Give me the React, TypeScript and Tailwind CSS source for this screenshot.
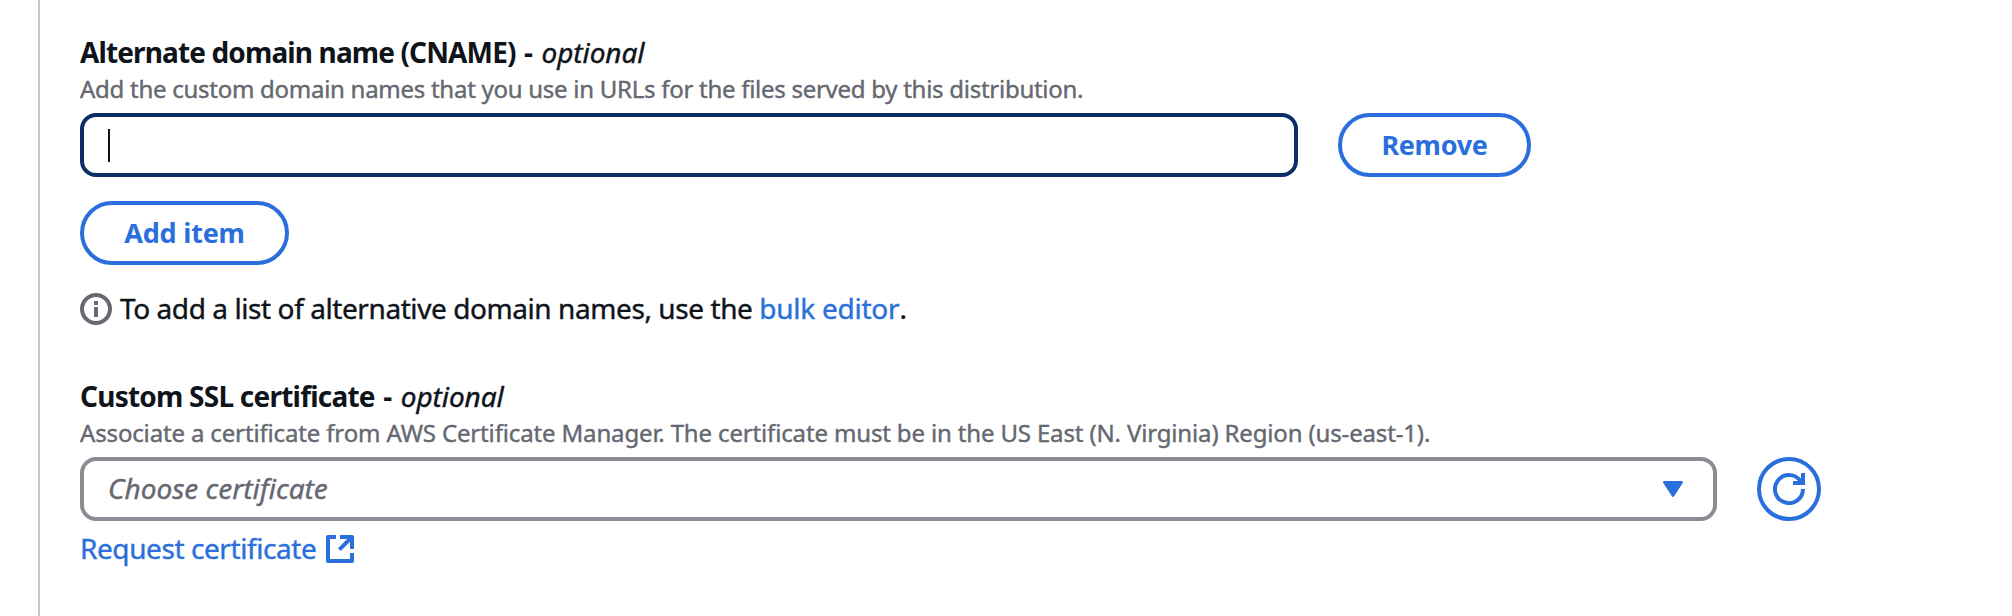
import type { ReactNode } from 'react';

function FieldLabel({ children, className }: { children: ReactNode; className: string }) {
  return (
    <div className="flex h-10 items-baseline whitespace-pre text-[28px] leading-10 text-[#0f141a]">
      <span className={`font-bold ${className}`}>{children}</span>
      <span className="w-[26px] shrink-0 text-center font-bold">-</span>
      <span className="italic tracking-[-0.1px] [-webkit-text-stroke:0.4px]">optional</span>
    </div>
  );
}

function Hint({ children, className }: { children: ReactNode; className: string }) {
  return (
    <p
      className={`mt-px h-8 whitespace-nowrap text-2xl leading-8 text-[#656871] [-webkit-text-stroke:0.4px] ${className}`}
    >
      {children}
    </p>
  );
}

function PillButton({ children, className }: { children: ReactNode; className: string }) {
  return (
    <button
      type="button"
      className={`flex h-16 items-center justify-center rounded-full border-4 border-[#2a6fdb] pb-px text-[27px] leading-10 font-bold text-[#2a6fdb] ${className}`}
    >
      {children}
    </button>
  );
}

function InfoIcon() {
  return (
    <svg viewBox="0 0 16 16" className="mt-0.5 size-8 shrink-0" fill="none" stroke="#656871" strokeWidth="2">
      <circle cx="8" cy="8" r="7" />
      <path d="M8 4v2M8 7v5" />
    </svg>
  );
}

function RefreshIcon() {
  return (
    <svg viewBox="0 0 16 16" className="size-8" fill="none" stroke="#2a6fdb" strokeWidth="2">
      <path d="M15 8A7 7 0 1 1 14.1 4.6" />
      <path d="M10 5h5V0" />
    </svg>
  );
}

function ExternalIcon() {
  return (
    <svg
      viewBox="0 0 16 16"
      className="mt-0.5 size-8"
      fill="none"
      stroke="#2a6fdb"
      strokeWidth="2"
      strokeLinejoin="round"
    >
      <path d="M14 10v4H2V2h4" />
      <path d="M8 2h6v6" />
      <path d="M7.7 8.3l6.3-6.3" />
    </svg>
  );
}

export default function App() {
  return (
    <main className="h-[616px] w-[2012px] overflow-hidden bg-white pl-[38px] font-['Noto_Sans',sans-serif]">
      <div className="h-full border-l-2 border-[#c6c6cd] pt-8 pl-10">
        <section>
          <FieldLabel className="tracking-[-0.87px]">Alternate domain name (CNAME)</FieldLabel>
          <Hint className="tracking-[-0.27px]">
            Add the custom domain names that you use in URLs for the files served by this distribution.
          </Hint>
          <div className="mt-2 flex gap-10">
            <div className="flex h-16 w-[1218px] items-center rounded-2xl border-4 border-[#0b2e66] pl-6">
              <span className="h-[33px] w-0.5 bg-[#0f141a]" />
            </div>
            <PillButton className="w-[193px] tracking-[-0.3px]">Remove</PillButton>
          </div>
          <PillButton className="mt-6 w-[209px] tracking-[-0.2px]">Add item</PillButton>
          <div className="mt-[23px] flex h-10 items-center gap-2 text-[28px] leading-10 tracking-[-0.42px] whitespace-nowrap text-[#0f141a] [-webkit-text-stroke:0.4px]">
            <InfoIcon />
            <p>
              To add a list of alternative domain names, use the{' '}
              <a className="tracking-[-0.25px] text-[#2a6fdb]">bulk editor</a>.
            </p>
          </div>
        </section>

        <section className="mt-12">
          <FieldLabel className="tracking-[-0.77px]">Custom SSL certificate</FieldLabel>
          <Hint className="tracking-[-0.15px]">
            Associate a certificate from AWS Certificate Manager. The certificate must be in the US East (N. Virginia)
            Region (us-east-1).
          </Hint>
          <div className="mt-2 flex gap-10">
            <div className="flex h-16 w-[1637px] items-center justify-between rounded-2xl border-4 border-[#8c8c94] pr-[30px] pl-6">
              <span className="pb-0.5 text-[28px] leading-10 text-[#656871] italic [-webkit-text-stroke:0.4px]">
                Choose certificate
              </span>
              <svg viewBox="0 0 20 16" className="h-4 w-5" fill="#2a6fdb">
                <path d="M1.3 0h17.4c1.1 0 1.6 1.2 1 2l-8.6 13.2c-.6.9-1.6.9-2.2 0L.3 2C-.3 1.2.2 0 1.3 0z" />
              </svg>
            </div>
            <button
              type="button"
              aria-label="Refresh"
              className="flex size-16 items-center justify-center rounded-full border-4 border-[#2a6fdb]"
            >
              <RefreshIcon />
            </button>
          </div>
          <a className="mt-[7px] flex h-10 items-center gap-2 text-[28px] leading-10 tracking-[-0.42px] text-[#2a6fdb]">
            <span className="[-webkit-text-stroke:0.4px]">Request certificate</span>
            <ExternalIcon />
          </a>
        </section>
      </div>
    </main>
  );
}
